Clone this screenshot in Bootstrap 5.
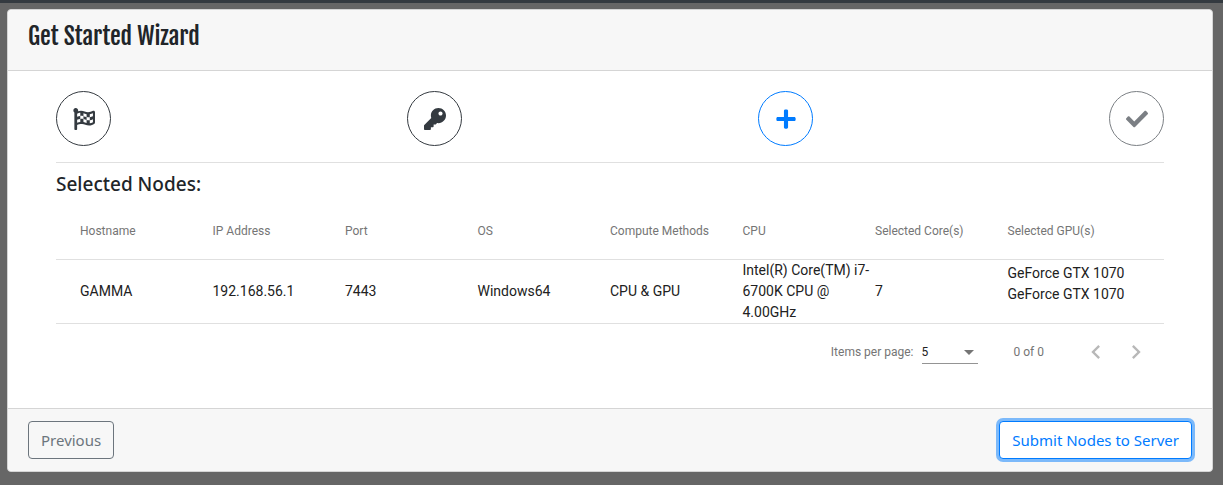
<!DOCTYPE html>
<html lang="en">
<head>
<meta charset="utf-8">
<meta name="viewport" content="width=device-width, initial-scale=1">
<title>Get Started Wizard</title>
<link href="https://cdn.jsdelivr.net/npm/bootstrap@5.3.0/dist/css/bootstrap.min.css" rel="stylesheet">
<style>
  body { background: #666; font-family: "Noto Sans", sans-serif; color: #212529; border-top: 3px solid #343a40; }
  .wizard-page { padding: 6px 10px 13px 7px; }
  .wizard { border-color: #d5d5d5; border-radius: 4px; --bs-card-cap-bg: #f7f7f7; --bs-card-border-color: #d5d5d5; }
  .wizard > .card-header { padding: 12px 20px 20px; }
  .wizard > .card-footer { padding: 12px 20px; }
  .wizard > .card-body { padding: 20px 48px 28px; }
  .wizard-title { font: 400 24px/28px "Fjalla One", "Liberation Sans Narrow", "Open Sans Condensed", sans-serif; }
  .step { width: 55px; height: 55px; border: 1px solid currentColor; background: #fff; color: #343a40; padding: 0; }
  .step svg { width: 22px; height: 22px; fill: currentColor; }
  .step-current { color: #007bff; }
  .step-pending { color: #7b7f84; }
  .steps { padding-bottom: 16px; border-bottom: 1px solid #e0e0e0; }
  .section-title { font-size: 19px; line-height: 24px; font-weight: 500; margin: 9px 0 7px; }
  .nodes, .pager { font-family: Roboto, sans-serif; }
  .nodes tr { display: flex; align-items: center; padding: 0 24px; border-bottom: 1px solid #e0e0e0; }
  .nodes th, .nodes td { flex: 1 1 0; min-width: 0; padding: 0; }
  .nodes th { font-size: 12px; font-weight: 400; color: #757575; line-height: 56px; white-space: nowrap; }
  .nodes td { font-size: 14px; line-height: 21px; color: #212121; }
  .pager { height: 56px; font-size: 12px; color: #757575; padding-right: 8px; }
  .page-size { width: 56px; height: 24px; border: 0; border-bottom: 1px solid #949494; border-radius: 0; padding: 0; font-size: 12px; color: #212121; appearance: none;
    background: transparent; }
  .size-box { margin: 0 36px 0 8px; }
  .size-box svg { position: absolute; right: 4px; top: 10px; pointer-events: none; }
  .pager-btn { width: 40px; height: 40px; border: 0; background: none; padding: 0; color: #b8b8b8; }
  .pager-btn svg { fill: currentColor; }
  .wizard .btn { --bs-btn-padding-x: 12px; font-size: 15px; line-height: 24px; border-radius: 4px; }
  .btn-back { color: #6c757d; border-color: #6c757d; }
  .btn-send, .btn-send:hover { color: #007bff; border-color: #007bff; background: #fff; box-shadow: 0 0 0 3px #7cb9fa; }
</style>
</head>
<body>
<main class="wizard-page">
  <div class="card wizard">
    <div class="card-header"><h1 class="wizard-title mb-0">Get Started Wizard</h1></div>
    <div class="card-body">
      <div class="steps d-flex justify-content-between">
        <button type="button" class="step rounded-circle d-flex align-items-center justify-content-center" aria-label="Start">
          <svg viewBox="0 0 512 512"><path d="M243.2 189.9V258c26.1 5.9 49.3 15.6 73.6 22.3v-68.2c-26-5.8-49.4-15.5-73.6-22.2zm223.3-123c-34.3 15.9-76.5 31.9-117 31.9C296 98.8 251.7 64 184.3 64c-25 0-47.3 4.4-68 12 2.8-7.3 4.1-15.2 3.6-23.6C118.1 24 94.8 1.2 66.3 0 34.3-1.3 8 24.3 8 56c0 19 9.5 35.8 24 45.9V488c0 13.3 10.7 24 24 24h16c13.3 0 24-10.7 24-24v-94.4c28.3-12.1 63.6-22.1 114.4-22.1 53.6 0 97.8 34.8 165.2 34.8 48.2 0 86.7-16.3 122.5-40.9 8.7-6 13.8-15.8 13.8-26.4V95.9c.1-23.3-24.2-38.8-45.4-29zM169.6 325.5c-25.8 2.7-50 8.2-73.6 16.6v-70.5c26.2-9.3 47.5-15 73.6-17.4v71.3zM464 191c-23.6 9.8-46.3 19.5-73.6 23.9V286c24.8-3.4 51.4-11.8 73.6-26v70.5c-25.1 16.1-48.5 24.7-73.6 27.1V286c-27 3.7-47.9 1.5-73.6-5.6v67.4c-23.9-7.4-47.3-16.7-73.6-21.3V258c-19.7-4.4-40.8-6.8-73.6-3.8v-70c-22.4 3.1-44.6 10.2-73.6 20.9v-70.5c33.2-12.2 50.1-19.8 73.6-22v71.6c27-3.7 48.4-1.3 73.6 5.7v-67.4c23.7 7.4 47.2 16.7 73.6 21.3v68.4c23.7 5.3 47.6 6.9 73.6 2.7V143c27-4.8 52.3-13.6 73.6-22.5z"/></svg>
        </button>
        <button type="button" class="step rounded-circle d-flex align-items-center justify-content-center" aria-label="License key">
          <svg viewBox="0 0 512 512"><path d="M512 176C512 273.2 433.2 352 336 352c-11.2 0-22.2-1.1-32.8-3.1l-24 27A24 24 0 0 1 261.2 384H224v40c0 13.3-10.7 24-24 24h-40v40c0 13.3-10.7 24-24 24H24c-13.3 0-24-10.7-24-24v-78.1c0-6.4 2.5-12.5 7-17l161.800-161.800C163.100 213.800 160 195.300 160 176 160 78.800 238.800 0 336 0 433.500 0 512 78.500 512 176zM336 128c0 26.500 21.500 48 48 48s48-21.500 48-48-21.500-48-48-48-48 21.500-48 48z"/></svg>
        </button>
        <button type="button" class="step step-current rounded-circle d-flex align-items-center justify-content-center" aria-label="Add nodes" aria-current="step">
          <svg viewBox="-32 0 512 512"><path d="M416 208H272V64c0-17.700-14.300-32-32-32h-32c-17.700 0-32 14.300-32 32v144H32c-17.700 0-32 14.300-32 32v32c0 17.700 14.300 32 32 32h144v144c0 17.700 14.300 32 32 32h32c17.700 0 32-14.300 32-32V304h144c17.700 0 32-14.300 32-32v-32c0-17.700-14.300-32-32-32z"/></svg>
        </button>
        <button type="button" class="step step-pending rounded-circle d-flex align-items-center justify-content-center" aria-label="Finish">
          <svg viewBox="0 0 512 512"><path d="M173.900 439.400l-166.400-166.400c-10-10-10-26.200 0-36.200l36.200-36.200c10-10 26.200-10 36.200 0L192 312.700 432.100 72.600c10-10 26.200-10 36.200 0l36.200 36.200c10 10 10 26.200 0 36.200l-294.400 294.400c-10 10-26.200 10-36.200 0z"/></svg>
        </button>
      </div>
      <h2 class="section-title">Selected Nodes:</h2>
      <table class="nodes d-block w-100">
        <thead class="d-block">
          <tr><th>Hostname</th><th>IP Address</th><th>Port</th><th>OS</th><th>Compute Methods</th><th>CPU</th><th>Selected Core(s)</th><th>Selected GPU(s)</th></tr>
        </thead>
        <tbody class="d-block">
          <tr>
            <td>GAMMA</td><td>192.168.56.1</td><td>7443</td><td>Windows64</td><td>CPU &amp; GPU</td>
            <td>Intel(R) Core(TM) i7-6700K CPU @ 4.00GHz</td><td>7</td>
            <td><p class="mb-3">GeForce GTX 1070<br>GeForce GTX 1070</p></td>
          </tr>
        </tbody>
      </table>
      <div class="pager d-flex align-items-center justify-content-end">
        <label for="pageSize">Items per page:</label>
        <div class="size-box position-relative">
          <select id="pageSize" class="page-size d-block"><option>5</option><option>10</option><option>25</option></select>
          <svg width="10" height="5" viewBox="0 0 10 5" fill="#757575"><path d="M0 0h10L5 5z"/></svg>
        </div>
        <span class="me-3 pe-3">0 of 0</span>
        <button type="button" class="pager-btn" aria-label="Previous page"><svg width="28" height="28" viewBox="0 0 24 24"><path d="M15.410 7.410L14 6l-6 6 6 6 1.410-1.410L10.830 12z"/></svg></button>
        <button type="button" class="pager-btn" aria-label="Next page"><svg width="28" height="28" viewBox="0 0 24 24"><path d="M10 6L8.590 7.410 13.170 12l-4.580 4.590L10 18l6-6z"/></svg></button>
      </div>
    </div>
    <div class="card-footer d-flex justify-content-between">
      <button type="button" class="btn btn-back">Previous</button>
      <button type="button" class="btn btn-send">Submit Nodes to Server</button>
    </div>
  </div>
</main>
<script src="https://cdn.jsdelivr.net/npm/bootstrap@5.3.0/dist/js/bootstrap.bundle.min.js"></script>
</body>
</html>
